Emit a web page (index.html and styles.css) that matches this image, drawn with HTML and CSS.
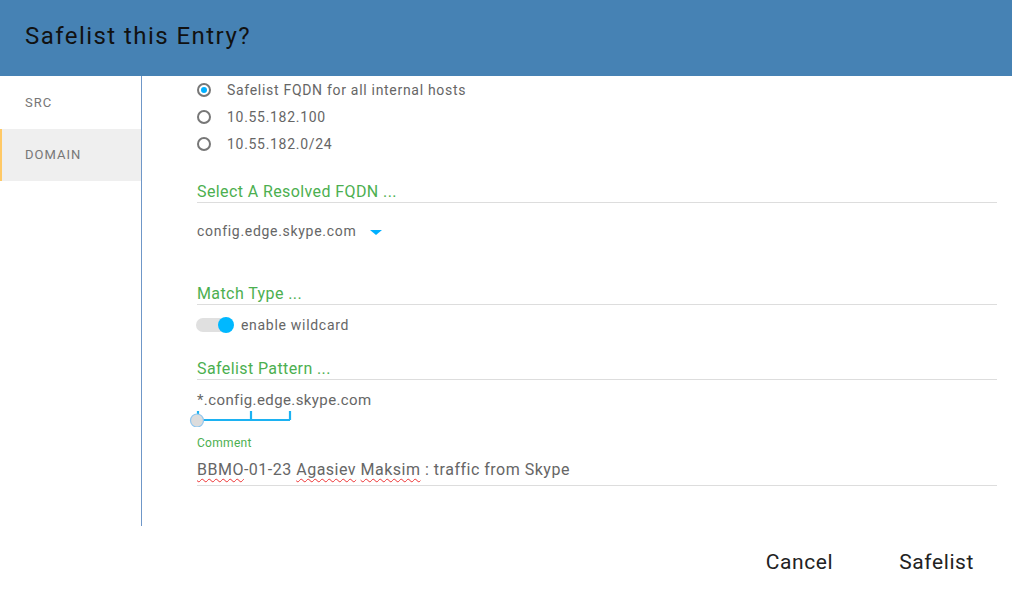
FILE: index.html
```html
<!DOCTYPE html>
<html>
<head>
<meta charset="utf-8">
<link rel="stylesheet" href="styles.css">
</head>
<body>
<div class="dialog">
  <div class="header"><h1 class="title">Safelist this Entry?</h1></div>
  <div class="main">
    <div class="sidebar">
      <div class="tab">SRC</div>
      <div class="tab active">DOMAIN</div>
    </div>
    <div class="content">
      <div class="radios">
        <div class="radio-row"><span class="radio checked"></span><span>Safelist FQDN for all internal hosts</span></div>
        <div class="radio-row"><span class="radio"></span><span>10.55.182.100</span></div>
        <div class="radio-row"><span class="radio"></span><span>10.55.182.0/24</span></div>
      </div>
      <div class="section-title s1">Select A Resolved FQDN ...</div>
      <div class="select"><span>config.edge.skype.com</span><span class="caret"></span></div>
      <div class="section-title s2">Match Type ...</div>
      <div class="toggle-row"><span class="toggle"><span class="knob"></span></span><span>enable wildcard</span></div>
      <div class="section-title s3">Safelist Pattern ...</div>
      <div class="pattern">*.config.edge.skype.com</div>
      <svg class="slider" width="110" height="22" viewBox="0 0 110 22">
        <path d="M8 15 H101 M9 15 V6 M62 15 V6 M101 15 V6" stroke="#1cb2f2" stroke-width="2.2" fill="none"/>
        <circle cx="8" cy="15.5" r="6.5" fill="#dcdcdc" stroke="#8fc6ee" stroke-width="1.2"/>
      </svg>
      <div class="comment-label">Comment</div>
      <div class="comment"><span class="sp">BBMO</span>-01-23 <span class="sp">Agasiev</span> <span class="sp">Maksim</span> : traffic from Skype</div>
    </div>
  </div>
  <div class="footer">
    <button class="btn">Cancel</button>
    <button class="btn">Safelist</button>
  </div>
</div>
</body>
</html>
```
FILE: styles.css
```css
* { box-sizing: border-box; }
html, body { margin: 0; padding: 0; background: #fff; }
body { font-family: Roboto, "Liberation Sans", sans-serif; width: 1012px; height: 594px; overflow: hidden; }
.header { height: 76px; background: #4682b4; padding: 21px 0 0 25px; }
.title { margin: 0; font-size: 24px; font-weight: 400; color: #111; line-height: 30px; letter-spacing: 1.45px; }
.main { display: flex; height: 450px; }
.sidebar { width: 142px; border-right: 1px solid #6f97c8; flex: none; }
.tab { height: 53px; line-height: 53px; font-size: 13px; color: #777; letter-spacing: 1px; border-left: 2px solid transparent; padding-left: 23px; }
.tab.active { background: #efefef; border-left-color: #ffc966; height: 52px; line-height: 52px; }
.content { flex: 1; padding: 0 15px 0 55px; color: #666; font-size: 14px; letter-spacing: 0.7px; }
.radios { display: flex; flex-direction: column; }
.radio-row { display: flex; align-items: center; height: 27px; gap: 16px; }
.radio { width: 14px; height: 14px; border: 2px solid #777; border-radius: 50%; display: flex; align-items: center; justify-content: center; }
.radio.checked::after { content: ""; width: 6px; height: 6px; border-radius: 50%; background: #00b0ff; }
.section-title { color: #4caf50; font-size: 16px; border-bottom: 1px solid #ddd; line-height: 20px; letter-spacing: 0.4px; }
.s1 { margin-top: 25px; }
.select { display: flex; align-items: center; height: 20px; margin-top: 18px; font-size: 14px; letter-spacing: 0.7px; }
.caret { width: 0; height: 0; border-left: 6px solid transparent; border-right: 6px solid transparent; border-top: 5px solid #00b0ff; margin-left: 14px; margin-top: 2px; }
.s2 { margin-top: 43px; }
.toggle-row { display: flex; align-items: center; height: 24px; margin-top: 8px; gap: 11px; }
.toggle { position: relative; width: 34px; height: 14px; background: #e0e0e0; border-radius: 7px; margin-left: -1px; }
.knob { position: absolute; right: -4px; top: -1px; width: 16px; height: 16px; border-radius: 50%; background: #00b8ff; }
.s3 { margin-top: 22px; }
.pattern { font-size: 15px; margin-top: 9px; line-height: 22px; color: #666; letter-spacing: 0.4px; }
.slider { display: block; margin-left: -8px; margin-top: -6px; }
.comment-label { color: #4caf50; font-size: 12px; margin-top: 8px; line-height: 16px; letter-spacing: 0.3px; }
.comment { font-size: 16px; line-height: 22px; margin-top: 8px; padding-bottom: 4px; border-bottom: 1px solid #ddd; color: #666; letter-spacing: 0.5px; }
.sp { text-decoration: underline wavy #e33; text-decoration-thickness: 1px; text-underline-offset: 3px; }
.footer { display: flex; justify-content: flex-end; padding-right: 22px; padding-top: 4px; height: 68px; align-items: center; }
.btn { background: none; border: none; font-family: inherit; font-size: 21px; color: #222; padding: 0 33px; letter-spacing: 0.6px; cursor: pointer; }
.btn:last-child { padding-right: 16px; }
```
